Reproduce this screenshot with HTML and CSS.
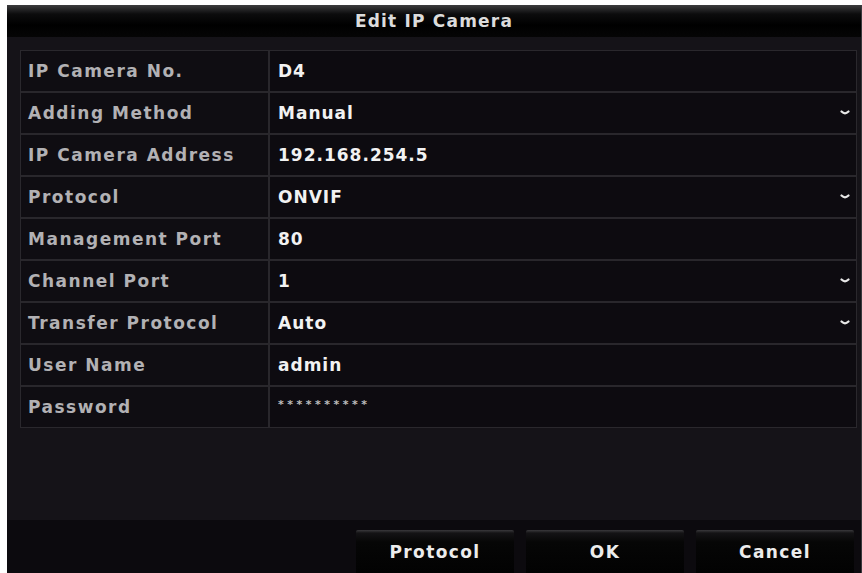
FILE: index.html
```html
<!DOCTYPE html>
<html lang="en">
<head>
    <meta charset="UTF-8">
    <title>Edit IP Camera</title>
    <link rel="stylesheet" href="styles.css">
</head>
<body>
    <div class="dialog">
        <div class="title">Edit IP Camera</div>

        <div class="content">
            <div class="table">
                <div class="row"><div class="label">IP Camera No.</div><div class="value">D4</div></div>
                <div class="row"><div class="label">Adding Method</div><div class="value">Manual<svg class="chev" viewBox="0 0 10 6"><path d="M1.5 1.5 Q5 5 8.5 1.5"/></svg></div></div>
                <div class="row"><div class="label">IP Camera Address</div><div class="value">192.168.254.5</div></div>
                <div class="row"><div class="label">Protocol</div><div class="value">ONVIF<svg class="chev" viewBox="0 0 10 6"><path d="M1.5 1.5 Q5 5 8.5 1.5"/></svg></div></div>
                <div class="row"><div class="label">Management Port</div><div class="value">80</div></div>
                <div class="row"><div class="label">Channel Port</div><div class="value">1<svg class="chev" viewBox="0 0 10 6"><path d="M1.5 1.5 Q5 5 8.5 1.5"/></svg></div></div>
                <div class="row"><div class="label">Transfer Protocol</div><div class="value">Auto<svg class="chev" viewBox="0 0 10 6"><path d="M1.5 1.5 Q5 5 8.5 1.5"/></svg></div></div>
                <div class="row"><div class="label">User Name</div><div class="value">admin</div></div>
                <div class="row"><div class="label">Password</div><div class="value"><span class="stars">**********</span></div></div>
            </div>
        </div>

        <div class="footer">
            <div class="btn">Protocol</div>
            <div class="btn">OK</div>
            <div class="btn">Cancel</div>
        </div>
    </div>
</body>
</html>
```

FILE: styles.css
```css
body { margin: 0; background: #fff; font-family: "DejaVu Sans", Verdana, sans-serif; font-weight: bold; }
.dialog { margin: 5px 0 0 7px; height: 568px; background: #161419; display: flex; flex-direction: column; border-right: 1px solid #3a383d; box-sizing: border-box; }
.title { height: 32px; display: flex; align-items: center; justify-content: center; background: linear-gradient(#3c3c3e 0, #0c0c0d 9px, #000 20px, #050505 100%); color: #dcdcdc; font-size: 17px; letter-spacing: 1.2px; }
.content { flex: 1; padding: 13px 4px 0 13px; background: #151318; }
.table { border: 1px solid #2a282d; background: #0d0b10; }
.row { display: flex; height: 40px; border-bottom: 2px solid #29272c; }
.row:last-child { border-bottom: none; }
.label { width: 249px; flex: none; display: flex; align-items: center; padding-left: 7px; box-sizing: border-box; border-right: 2px solid #29272c; color: #b2b1b4; font-size: 17px; letter-spacing: 1.5px; background: #0f0d12; }
.value { flex: 1; display: flex; align-items: center; padding-left: 8px; padding-right: 6px; color: #f2f2f2; font-size: 17px; letter-spacing: 1px; }
.chev { width: 10px; height: 6px; margin-left: auto; fill: none; stroke: #e8e8e8; stroke-width: 2.2; stroke-linecap: round; }
.stars { color: #bdbdbd; font-size: 11px; letter-spacing: 3.5px; margin-top: -5px; }
.footer { height: 53px; background: #0c0a0e; display: flex; align-items: flex-end; justify-content: flex-end; gap: 12px; padding-right: 7px; }
.btn { width: 158px; height: 43px; display: flex; align-items: center; justify-content: center; background: linear-gradient(#3a393c 0, #141315 3px, #060606 12px, #020202 100%); color: #ececec; font-size: 17px; letter-spacing: 1.4px; border-radius: 2px 2px 0 0; }
```
